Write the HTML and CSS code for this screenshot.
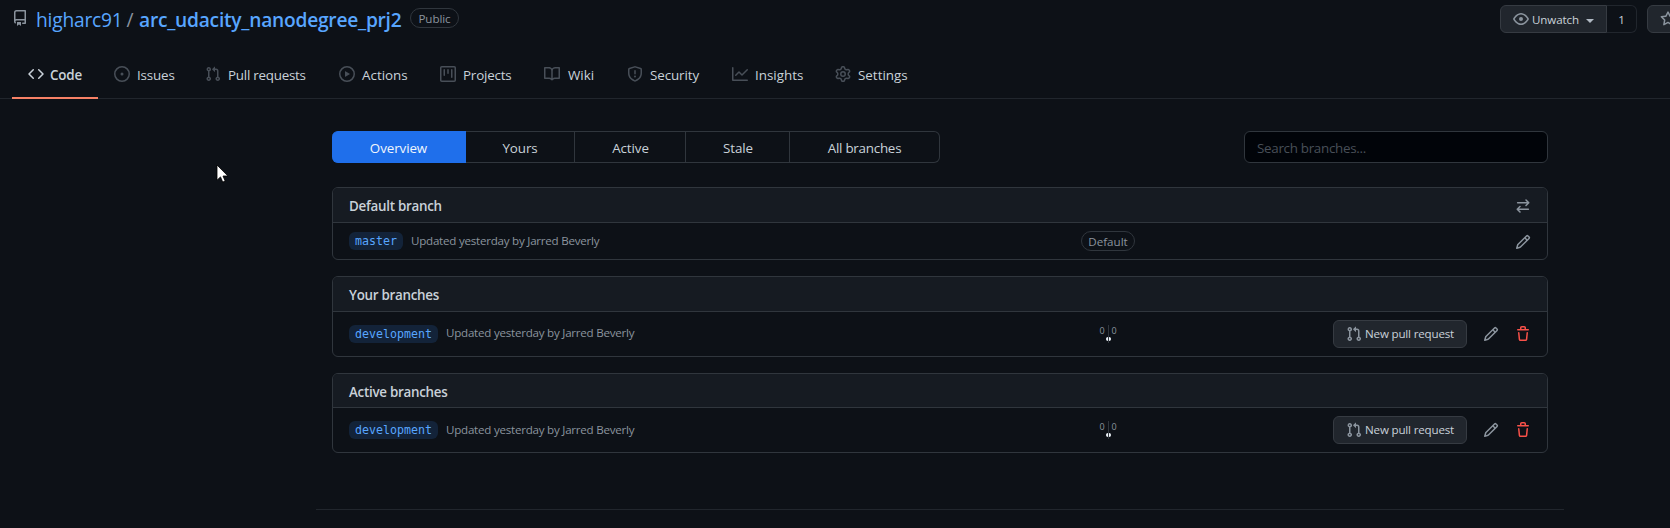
FILE: index.html
```html
<!DOCTYPE html>
<html lang="en">
<head>
<meta charset="utf-8">
<title>Branches · higharc91/arc_udacity_nanodegree_prj2</title>
<link rel="stylesheet" href="styles.css">
</head>
<body>
<svg class="defs" xmlns="http://www.w3.org/2000/svg">
  <symbol id="repo" viewBox="0 0 16 16"><path fill-rule="evenodd" d="M2 2.5A2.5 2.5 0 014.5 0h8.75a.75.75 0 01.75.75v12.5a.75.75 0 01-.75.75h-2.5a.75.75 0 110-1.5h1.75v-2h-8a1 1 0 00-.714 1.7.75.75 0 01-1.072 1.05A2.495 2.495 0 012 11.5v-9zm10.5-1V9h-8c-.356 0-.694.074-1 .208V2.5a1 1 0 011-1h8zM5 12.25v3.25a.25.25 0 00.4.2l1.45-1.087a.25.25 0 01.3 0L8.6 15.7a.25.25 0 00.4-.2v-3.25a.25.25 0 00-.25-.25h-3.5a.25.25 0 00-.25.25z"/></symbol>
  <symbol id="code" viewBox="0 0 16 16"><path fill-rule="evenodd" d="M4.72 3.22a.75.75 0 011.06 1.06L2.06 8l3.72 3.72a.75.75 0 11-1.06 1.06L.47 8.53a.75.75 0 010-1.06l4.25-4.25zm6.56 0a.75.75 0 10-1.06 1.06L13.94 8l-3.72 3.72a.75.75 0 101.06 1.06l4.25-4.25a.75.75 0 000-1.06l-4.25-4.25z"/></symbol>
  <symbol id="issue" viewBox="0 0 16 16"><path d="M8 9.5a1.5 1.5 0 100-3 1.5 1.5 0 000 3z"/><path fill-rule="evenodd" d="M8 0a8 8 0 100 16A8 8 0 008 0zM1.5 8a6.5 6.5 0 1113 0 6.5 6.5 0 01-13 0z"/></symbol>
  <symbol id="pull" viewBox="0 0 16 16"><path fill-rule="evenodd" d="M7.177 3.073L9.573.677A.25.25 0 0110 .854v4.792a.25.25 0 01-.427.177L7.177 3.427a.25.25 0 010-.354zM3.75 2.5a.75.75 0 100 1.5.75.75 0 000-1.5zm-2.25.75a2.25 2.25 0 113 2.122v5.256a2.251 2.251 0 11-1.5 0V5.372A2.25 2.25 0 011.5 3.25zM11 2.5h-1V4h1a1 1 0 011 1v5.628a2.251 2.251 0 101.5 0V5A2.5 2.5 0 0011 2.5zm1 10.25a.75.75 0 111.5 0 .75.75 0 01-1.5 0zM3.75 12a.75.75 0 100 1.5.75.75 0 000-1.5z"/></symbol>
  <symbol id="play" viewBox="0 0 16 16"><path fill-rule="evenodd" d="M1.5 8a6.5 6.5 0 1113 0 6.5 6.5 0 01-13 0zM8 0a8 8 0 100 16A8 8 0 008 0zM6.379 5.227A.25.25 0 006 5.442v5.117a.25.25 0 00.379.214l4.264-2.559a.25.25 0 000-.428L6.379 5.227z"/></symbol>
  <symbol id="project" viewBox="0 0 16 16"><path fill-rule="evenodd" d="M1.75 0A1.75 1.75 0 000 1.75v12.5C0 15.216.784 16 1.75 16h12.5A1.75 1.75 0 0016 14.25V1.75A1.75 1.75 0 0014.25 0H1.75zM1.5 1.75a.25.25 0 01.25-.25h12.5a.25.25 0 01.25.25v12.5a.25.25 0 01-.25.25H1.75a.25.25 0 01-.25-.25V1.75zM11.75 3a.75.75 0 00-.75.75v7.5a.75.75 0 001.5 0v-7.5a.75.75 0 00-.75-.75zm-8.25.75a.75.75 0 011.5 0v5.5a.75.75 0 01-1.5 0v-5.5zM8 3a.75.75 0 00-.75.75v3.5a.75.75 0 001.5 0v-3.5A.75.75 0 008 3z"/></symbol>
  <symbol id="book" viewBox="0 0 16 16"><path fill-rule="evenodd" d="M0 1.75A.75.75 0 01.75 1h4.253c1.227 0 2.317.59 3 1.501A3.744 3.744 0 0111.006 1h4.245a.75.75 0 01.75.75v10.5a.75.75 0 01-.75.75h-4.507a2.25 2.25 0 00-1.591.659l-.622.621a.75.75 0 01-1.06 0l-.622-.621A2.25 2.25 0 005.258 13H.75a.75.75 0 01-.75-.75V1.75zm8.755 3a2.25 2.25 0 012.25-2.25H14.5v9h-3.757c-.71 0-1.4.201-1.992.572l.004-7.322zm-1.504 7.324l.004-5.073-.002-2.253A2.25 2.25 0 005.003 2.5H1.5v9h3.757a3.75 3.75 0 011.994.574z"/></symbol>
  <symbol id="shield" viewBox="0 0 16 16"><path fill-rule="evenodd" d="M7.467.133a1.75 1.75 0 011.066 0l5.25 1.68A1.75 1.75 0 0115 3.48V7c0 1.566-.32 3.182-1.303 4.682-.983 1.498-2.585 2.813-5.032 3.855a1.7 1.7 0 01-1.33 0c-2.447-1.042-4.049-2.357-5.032-3.855C1.32 10.182 1 8.566 1 7V3.48a1.75 1.75 0 011.217-1.667l5.25-1.68zm.61 1.429a.25.25 0 00-.153 0l-5.25 1.68a.25.25 0 00-.174.238V7c0 1.358.275 2.666 1.057 3.86.784 1.194 2.121 2.34 4.366 3.297a.2.2 0 00.154 0c2.245-.956 3.582-2.104 4.366-3.298C13.225 9.666 13.5 8.36 13.5 7V3.48a.25.25 0 00-.174-.237l-5.25-1.68zM9 10.5a1 1 0 11-2 0 1 1 0 012 0zm-.25-5.75a.75.75 0 10-1.5 0v3a.75.75 0 001.5 0v-3z"/></symbol>
  <symbol id="graph" viewBox="0 0 16 16"><path fill-rule="evenodd" d="M1.5 1.75a.75.75 0 00-1.5 0v12.5c0 .414.336.75.75.75h14.5a.75.75 0 000-1.5H1.5V1.75zm14.28 2.53a.75.75 0 00-1.06-1.06L10 7.94 7.53 5.47a.75.75 0 00-1.06 0L3.22 8.72a.75.75 0 001.06 1.06L7 7.06l2.47 2.47a.75.75 0 001.06 0l5.25-5.25z"/></symbol>
  <symbol id="gear" viewBox="0 0 16 16"><path fill-rule="evenodd" d="M7.429 1.525a6.593 6.593 0 011.142 0c.036.003.108.036.137.146l.289 1.105c.147.56.55.967.997 1.189.174.086.341.183.501.29.417.278.97.423 1.53.27l1.102-.303c.11-.03.175.016.195.046.219.31.41.641.573.989.014.031.022.11-.059.19l-.815.806c-.411.406-.562.957-.53 1.456a4.588 4.588 0 010 .582c-.032.499.119 1.05.53 1.456l.815.806c.08.08.073.159.059.19a6.494 6.494 0 01-.573.99c-.02.029-.086.074-.195.045l-1.103-.303c-.559-.153-1.112-.008-1.529.27-.16.107-.327.204-.5.29-.449.222-.851.628-.998 1.189l-.289 1.105c-.029.11-.101.143-.137.146a6.613 6.613 0 01-1.142 0c-.036-.003-.108-.037-.137-.146l-.289-1.105c-.147-.56-.55-.967-.997-1.189a4.502 4.502 0 01-.501-.29c-.417-.278-.97-.423-1.53-.27l-1.102.303c-.11.03-.175-.016-.195-.046a6.492 6.492 0 01-.573-.989c-.014-.031-.022-.11.059-.19l.815-.806c.411-.406.562-.957.53-1.456a4.587 4.587 0 010-.582c.032-.499-.119-1.05-.53-1.456l-.815-.806c-.08-.08-.073-.159-.059-.19a6.44 6.44 0 01.573-.99c.02-.029.086-.075.195-.045l1.103.303c.559.153 1.112.008 1.529-.27.16-.107.327-.204.5-.29.449-.222.851-.628.998-1.189l.289-1.105c.029-.11.101-.143.137-.146zM8 0c-.236 0-.47.01-.701.03-.743.065-1.29.615-1.458 1.261l-.29 1.106c-.017.066-.078.158-.211.224a5.994 5.994 0 00-.668.386c-.123.082-.233.09-.3.071L3.27 2.776c-.644-.177-1.392.02-1.82.63a7.977 7.977 0 00-.704 1.217c-.315.675-.111 1.422.363 1.891l.815.806c.05.048.098.147.088.294a6.084 6.084 0 000 .772c.01.147-.038.246-.088.294l-.815.806c-.474.469-.678 1.216-.363 1.891.2.428.436.835.704 1.218.428.609 1.176.806 1.82.63l1.103-.303c.066-.019.176-.011.299.071.213.143.436.272.668.386.133.066.194.158.212.224l.289 1.106c.169.646.715 1.196 1.458 1.26a8.094 8.094 0 001.402 0c.743-.064 1.29-.614 1.458-1.26l.29-1.106c.017-.066.078-.158.211-.224a5.98 5.98 0 00.668-.386c.123-.082.233-.09.3-.071l1.102.302c.644.177 1.392-.02 1.82-.63.268-.382.505-.789.704-1.217.315-.675.111-1.422-.364-1.891l-.814-.806c-.05-.048-.098-.147-.088-.294a6.1 6.1 0 000-.772c-.01-.147.039-.246.088-.294l.814-.806c.475-.469.679-1.216.364-1.891a7.992 7.992 0 00-.704-1.218c-.428-.609-1.176-.806-1.82-.63l-1.103.303c-.066.019-.176.011-.299-.071a5.991 5.991 0 00-.668-.386c-.133-.066-.194-.158-.212-.224L10.16 1.29C9.99.645 9.444.095 8.701.031A8.094 8.094 0 008 0zm1.5 8a1.5 1.5 0 11-3 0 1.5 1.5 0 013 0zM11 8a3 3 0 11-6 0 3 3 0 016 0z"/></symbol>
  <symbol id="eye" viewBox="0 0 16 16"><path fill-rule="evenodd" d="M1.679 7.932c.412-.621 1.242-1.75 2.366-2.717C5.175 4.242 6.527 3.5 8 3.5c1.473 0 2.824.742 3.955 1.715 1.124.967 1.954 2.096 2.366 2.717a.119.119 0 010 .136c-.412.621-1.242 1.75-2.366 2.717C10.825 11.758 9.473 12.5 8 12.5c-1.473 0-2.824-.742-3.955-1.715C2.92 9.818 2.09 8.69 1.679 8.068a.119.119 0 010-.136zM8 2c-1.981 0-3.67.992-4.933 2.078C1.797 5.169.88 6.423.43 7.1a1.619 1.619 0 000 1.798c.45.678 1.367 1.932 2.637 3.024C4.329 13.008 6.019 14 8 14c1.981 0 3.67-.992 4.933-2.078 1.27-1.091 2.187-2.345 2.637-3.023a1.619 1.619 0 000-1.798c-.45-.678-1.367-1.932-2.637-3.023C11.671 2.992 9.981 2 8 2zm0 8a2 2 0 100-4 2 2 0 000 4z"/></symbol>
  <symbol id="star" viewBox="0 0 16 16"><path fill-rule="evenodd" d="M8 .25a.75.75 0 01.673.418l1.882 3.815 4.21.612a.75.75 0 01.416 1.279l-3.046 2.97.719 4.192a.75.75 0 01-1.088.791L8 12.347l-3.766 1.98a.75.75 0 01-1.088-.79l.72-4.194L.818 6.374a.75.75 0 01.416-1.28l4.21-.611L7.327.668A.75.75 0 018 .25zm0 2.445L6.615 5.5a.75.75 0 01-.564.41l-3.097.45 2.24 2.184a.75.75 0 01.216.664l-.528 3.084 2.769-1.456a.75.75 0 01.698 0l2.77 1.456-.53-3.084a.75.75 0 01.216-.664l2.24-2.183-3.096-.45a.75.75 0 01-.564-.41L8 2.694v.001z"/></symbol>
  <symbol id="swap" viewBox="0 0 16 16"><path fill="none" stroke="currentColor" stroke-width="1.5" stroke-linecap="round" stroke-linejoin="round" d="M2.6 4.75h11M11 2l2.75 2.75L11 7.5M13.4 11.25h-11M5 8.5l-2.75 2.75L5 14"/></symbol>
  <symbol id="pencil" viewBox="0 0 16 16"><path fill-rule="evenodd" d="M11.013 1.427a1.75 1.75 0 012.474 0l1.086 1.086a1.75 1.75 0 010 2.474l-8.61 8.61c-.21.21-.47.364-.756.445l-3.251.93a.75.75 0 01-.927-.928l.929-3.25a1.75 1.75 0 01.445-.758l8.61-8.61zm1.414 1.06a.25.25 0 00-.354 0L10.811 3.75l1.439 1.44 1.263-1.263a.25.25 0 000-.354l-1.086-1.086zM11.189 6.25L9.75 4.81l-6.286 6.287a.25.25 0 00-.064.108l-.558 1.953 1.953-.558a.249.249 0 00.108-.064l6.286-6.286z"/></symbol>
  <symbol id="trash" viewBox="0 0 16 16"><path fill-rule="evenodd" d="M6.5 1.75a.25.25 0 01.25-.25h2.5a.25.25 0 01.25.25V3h-3V1.75zm4.5 0V3h2.25a.75.75 0 010 1.5H2.75a.75.75 0 010-1.5H5V1.75C5 .784 5.784 0 6.75 0h2.5C10.216 0 11 .784 11 1.75zM4.496 6.675a.75.75 0 10-1.492.15l.66 6.6A1.75 1.75 0 005.405 15h5.19c.9 0 1.652-.681 1.741-1.576l.66-6.6a.75.75 0 00-1.492-.149l-.66 6.6a.25.25 0 01-.249.225h-5.19a.25.25 0 01-.249-.225l-.66-6.6z"/></symbol>
</svg>

<header class="page-head">
  <div class="title-bar">
    <h1 class="title">
      <svg class="icon repo-icon"><use href="#repo"/></svg>
      <a class="owner">higharc91</a><span class="slash">/</span><a class="repo">arc_udacity_nanodegree_prj2</a>
      <span class="pill visibility">Public</span>
    </h1>
    <div class="head-actions">
      <div class="watch">
        <button class="watch-btn"><svg class="icon"><use href="#eye"/></svg><span>Unwatch</span><i class="caret"></i></button>
        <span class="count">1</span>
      </div>
      <button class="star-btn"><svg class="icon"><use href="#star"/></svg></button>
    </div>
  </div>
  <nav class="tabs">
    <a class="tab tab-code"><svg class="icon"><use href="#code"/></svg><span>Code</span></a>
    <a class="tab tab-issues"><svg class="icon"><use href="#issue"/></svg><span>Issues</span></a>
    <a class="tab tab-pulls"><svg class="icon"><use href="#pull"/></svg><span>Pull requests</span></a>
    <a class="tab tab-actions"><svg class="icon"><use href="#play"/></svg><span>Actions</span></a>
    <a class="tab tab-projects"><svg class="icon"><use href="#project"/></svg><span>Projects</span></a>
    <a class="tab tab-wiki"><svg class="icon"><use href="#book"/></svg><span>Wiki</span></a>
    <a class="tab tab-security"><svg class="icon"><use href="#shield"/></svg><span>Security</span></a>
    <a class="tab tab-insights"><svg class="icon"><use href="#graph"/></svg><span>Insights</span></a>
    <a class="tab tab-settings"><svg class="icon"><use href="#gear"/></svg><span>Settings</span></a>
  </nav>
</header>

<main class="content">
  <div class="toolbar">
    <nav class="subnav">
      <a class="sub sub-overview">Overview</a>
      <a class="sub sub-yours">Yours</a>
      <a class="sub sub-active">Active</a>
      <a class="sub sub-stale">Stale</a>
      <a class="sub sub-all">All branches</a>
    </nav>
    <input class="search" type="text" placeholder="Search branches...">
  </div>

  <section class="box box-default">
    <div class="box-head"><h2>Default branch</h2><svg class="icon"><use href="#swap"/></svg></div>
    <div class="row">
      <div class="name"><a class="branch">master</a><span class="updated">Updated yesterday by Jarred Beverly</span></div>
      <div class="middle"><span class="pill default">Default</span></div>
      <div class="actions"><svg class="icon"><use href="#pencil"/></svg></div>
    </div>
  </section>

  <section class="box box-yours">
    <div class="box-head"><h2>Your branches</h2></div>
    <div class="row">
      <div class="name"><a class="branch">development</a><span class="updated">Updated yesterday by Jarred Beverly</span></div>
      <div class="middle"><div class="diff"><span class="behind">0</span><span class="ahead">0</span><i class="dot"></i></div></div>
      <div class="actions"><button class="new-pr"><svg class="icon"><use href="#pull"/></svg><span>New pull request</span></button><svg class="icon"><use href="#pencil"/></svg><svg class="icon danger"><use href="#trash"/></svg></div>
    </div>
  </section>

  <section class="box box-active">
    <div class="box-head"><h2>Active branches</h2></div>
    <div class="row">
      <div class="name"><a class="branch">development</a><span class="updated">Updated yesterday by Jarred Beverly</span></div>
      <div class="middle"><div class="diff"><span class="behind">0</span><span class="ahead">0</span><i class="dot"></i></div></div>
      <div class="actions"><button class="new-pr"><svg class="icon"><use href="#pull"/></svg><span>New pull request</span></button><svg class="icon"><use href="#pencil"/></svg><svg class="icon danger"><use href="#trash"/></svg></div>
    </div>
  </section>
</main>
<footer class="footer"></footer>

<svg class="cursor" viewBox="0 0 13 20"><path d="M1 1v15.2l3.5-3.3 2.2 5.2 2.5-1-2.2-5.1h4.9z" fill="#fff" stroke="#000" stroke-width=".8"/></svg>
</body>
</html>
```

FILE: styles.css
```css
* { box-sizing: border-box; }
body {
  margin: 0;
  height: 528px;
  overflow: hidden;
  background: #0d1117;
  color: #c9d1d9;
  font: 13.4px/20px "Open Sans", "Noto Sans", sans-serif;
}
h1, h2 { margin: 0; font: inherit; }
button { font: inherit; color: inherit; margin: 0; }
.defs { display: none; }
.icon { width: 16px; height: 16px; flex: none; fill: currentColor; color: #8b949e; }
.danger { color: #f85149; }

.page-head { height: 99px; border-bottom: 1px solid #21262d; }
.title-bar { display: flex; justify-content: space-between; height: 50px; }
.title { display: flex; align-items: flex-start; padding: 5px 0 0 12px; font-size: 19.2px; line-height: 30px; }
.title a { color: #58a6ff; white-space: nowrap; }
.repo-icon { margin: 5px 8px 0 0; }
.owner { width: 85px; letter-spacing: -.2px; }
.slash { width: 18px; text-align: center; color: #8b949e; }
.repo { width: 271px; font-weight: 600; letter-spacing: -.25px; }
.pill {
  display: flex; justify-content: center; align-items: center;
  height: 20px; border: 1px solid #30363d; border-radius: 10px;
  font-size: 11.6px; line-height: 18px; color: #8b949e;
}
.visibility { width: 49px; margin-top: 3px; padding-top: 1px; letter-spacing: -.1px; }

.head-actions { display: flex; width: 170px; padding-top: 5px; gap: 10px; flex: none; }
.watch { display: flex; height: 28px; width: 137px; flex: none; font-size: 11.6px; }
.watch-btn {
  display: flex; align-items: center; width: 107px; padding: 0 0 0 12px;
  background: #21262d; border: 1px solid #363b42; border-radius: 6px 0 0 6px;
}
.watch-btn span { width: 54px; padding: 1px 0 0 3px; text-align: left; letter-spacing: -.1px; }
.caret { border: 4px solid transparent; border-top-color: #b1bac4; border-bottom: 0; margin: 4px 0 0 3px; }
.count {
  width: 30px; text-align: center; line-height: 27px;
  border: 1px solid #21262d; border-left: 0; border-radius: 0 6px 6px 0;
}
.star-btn {
  display: flex; align-items: center; flex: none; width: 80px; height: 28px; padding: 0 0 0 12px;
  background: #21262d; border: 1px solid #363b42; border-radius: 6px;
}

.tabs { display: flex; height: 49px; padding-left: 12px; }
.tab { display: flex; flex: none; padding: 16px 0 0 16px; gap: 7px; white-space: nowrap; line-height: 18px; }
.tab .icon { color: #484f58; }
.tab-code { width: 86px; border-bottom: 2px solid #f78166; font-weight: 600; gap: 6px; letter-spacing: -.2px; }
.tab-code .icon { color: #c9d1d9; }
.tab-issues { width: 91px; letter-spacing: -.15px; }
.tab-pulls { width: 134px; letter-spacing: -.25px; }
.tab-actions { width: 101px; }
.tab-projects { width: 104px; letter-spacing: -.2px; }
.tab-wiki { width: 83px; gap: 8px; }
.tab-security { width: 105px; letter-spacing: -.1px; }
.tab-insights { width: 103px; }

.content { padding: 32px 0 0 332px; width: 1548px; }
.toolbar { display: flex; justify-content: space-between; height: 32px; margin-bottom: 24px; }
.subnav { display: flex; width: 608px; }
.sub { border: 1px solid #30363d; border-left: 0; line-height: 32px; text-align: center; letter-spacing: -.1px; }
.sub-overview { width: 134px; background: #1f6feb; border-color: #1f6feb; border-radius: 6px 0 0 6px; color: #f0f6fc; }
.sub-yours { width: 109px; }
.sub-active { width: 111px; padding-left: 1px; }
.sub-stale { width: 104px; padding-left: 1px; }
.sub-all { width: 150px; border-radius: 0 6px 6px 0; letter-spacing: -.25px; }
.search {
  width: 304px; height: 32px; padding: 2px 12px 0; border: 1px solid #30363d; border-radius: 6px;
  background: #010409; font: inherit; color: #c9d1d9; letter-spacing: -.3px;
}
.search::placeholder { color: #484f58; opacity: 1; }

.box { border: 1px solid #30363d; border-radius: 6px; margin-bottom: 16px; overflow: hidden; }
.box-default { height: 73px; }
.box-yours { height: 81px; }
.box-active { height: 80px; }
.box-head {
  display: flex; justify-content: space-between; align-items: center;
  height: 35px; padding: 2px 16px 0; background: #161b22; border-bottom: 1px solid #30363d;
}
.box-active .box-head { height: 34px; }
.box-head h2 { font-weight: 600; letter-spacing: -.28px; }
.row { display: grid; grid-template-columns: 659px 200px 1fr; height: 43px; padding: 0 16px; align-items: center; }
.box-default .row { height: 36px; }
.box-default .actions { padding-top: 2px; }
.name { display: flex; align-items: center; gap: 8px; }
.box-yours .name { padding-top: 1px; }
.box-default .middle { height: 20px; }
.branch {
  height: 18px; padding: 0 6px; border-radius: 6px; background: rgba(56, 139, 253, .15);
  color: #58a6ff; font: 11.63px/18px "DejaVu Sans Mono", "Liberation Mono", monospace;
}
.updated { font-size: 11.6px; line-height: 18px; color: #8b949e; white-space: nowrap; letter-spacing: -.24px; }
.box-yours .updated { padding-bottom: 2px; }
.middle { display: flex; justify-content: center; }
.default { width: 54px; padding-top: 1px; }
.diff { position: relative; display: grid; grid-template-columns: 9px 9px; width: 17px; height: 18px; font-size: 9px; line-height: 12px; color: #8b949e; }
.behind { border-right: 1px solid #30363d; height: 18px; }
.ahead { padding-left: 3px; }
.dot { position: absolute; left: 6px; top: 12px; width: 5px; height: 4px; border-radius: 2px; background: linear-gradient(90deg, #f0f6fc 2px, #30363d 2px 3px, #f0f6fc 3px); }
.actions { display: flex; justify-content: flex-end; align-items: center; gap: 16px; }
.actions > .icon { margin-top: 1px; }
.box-default .actions > .icon { margin-top: 0; }
.new-pr {
  display: flex; align-items: center; width: 134px; height: 28px; padding: 0 0 0 12px; gap: 3px;
  background: #21262d; border: 1px solid #363b42; border-radius: 6px; font-size: 11.6px; white-space: nowrap; letter-spacing: -.18px;
}
.new-pr span { padding-top: 1px; }

.footer { width: 1248px; margin: 56px 0 0 316px; border-top: 1px solid #21262d; }
.cursor { position: absolute; left: 216px; top: 164px; width: 13px; height: 20px; }
```
